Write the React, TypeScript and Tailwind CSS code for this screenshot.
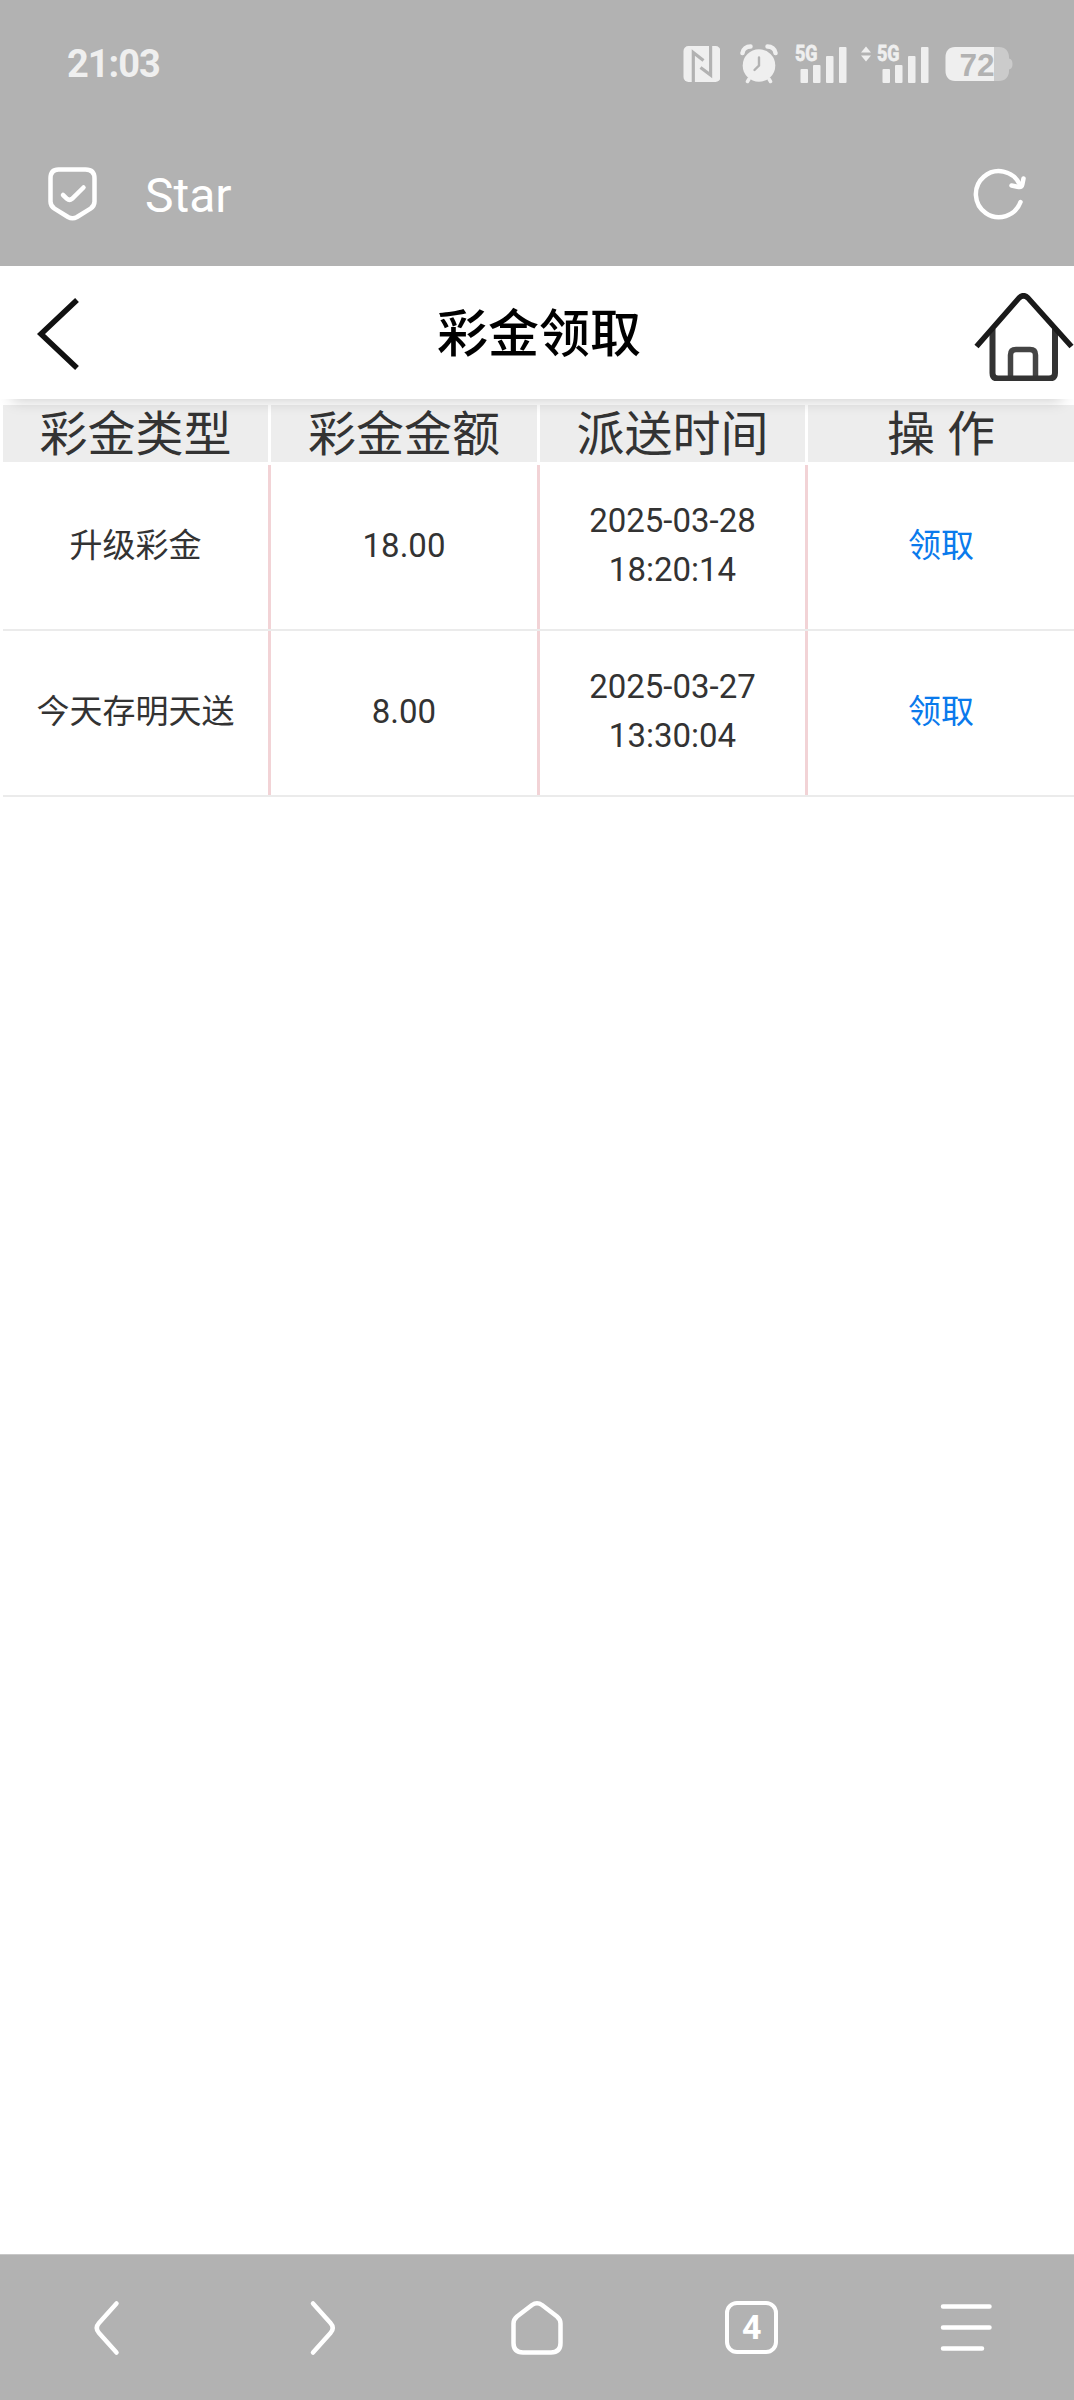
import type { ReactNode } from "react";

const rows = [
  { type: "升级彩金", amount: "18.00", date: "2025-03-28", time: "18:20:14" },
  { type: "今天存明天送", amount: "8.00", date: "2025-03-27", time: "13:30:04" },
];

const headers = ["彩金类型", "彩金金额", "派送时间", "操 作"];

function NfcIcon() {
  return (
    <svg width="38" height="38" viewBox="0 0 38 38" fill="none">
      <rect x="1.500" y="1" width="37" height="36" rx="5" fill="#efefef" />
      <path d="M11.300 37V7.500L21.500 15.500" stroke="#b2b2b2" strokeWidth="3.200" />
      <path d="M28.600 1V30L18.500 22.500" stroke="#b2b2b2" strokeWidth="3.200" />
    </svg>
  );
}

function AlarmIcon() {
  return (
    <svg width="38" height="40" viewBox="0 0 38 40" fill="none">
      <circle cx="19" cy="21.500" r="16.300" fill="#efefef" />
      <path d="M2.500 9C3 5 6.500 2.500 10.500 2.500M35.500 9C35 5 31.500 2.500 27.500 2.500" stroke="#efefef" strokeWidth="4.500" strokeLinecap="round" />
      <path d="M9 35L7.500 37.500M29 35L30.500 37.500" stroke="#efefef" strokeWidth="3.500" strokeLinecap="round" />
      <path d="M19 13.500V21.500L14.500 26" stroke="#b2b2b2" strokeWidth="2.400" strokeLinecap="round" />
    </svg>
  );
}

function SignalIcon({ arrows = false }: { arrows?: boolean }) {
  return (
    <svg width="70" height="50" viewBox="0 -6 70 50" fill="#efefef">
      {arrows && (
        <>
          <path d="M1 7.500L6 1.500L11 7.500Z" />
          <path d="M1 10.500L6 16.500L11 10.500Z" />
        </>
      )}
      <text
        x="17"
        y="16"
        fontSize="21.500"
        fontWeight="700"
        textLength="22.500"
        lengthAdjust="spacingAndGlyphs"
        fontFamily="Roboto, sans-serif"
        stroke="#efefef"
        strokeWidth="0.800"
      >
        5G
      </text>
      <rect x="22.500" y="24" width="7.500" height="14" rx="1" />
      <rect x="35" y="20" width="7.500" height="18" rx="1" />
      <rect x="48" y="11" width="7.500" height="27" rx="1" />
      <rect x="61" y="2" width="7.500" height="36" rx="1" />
    </svg>
  );
}

function BatteryIcon() {
  return (
    <svg width="68" height="36" viewBox="0 0 68 36">
      <path d="M49 1H54C60 1 64 5 64 11V12.500C66 13 67.500 14 67.500 18S66 23 64 23.500V25C64 31 60 35 54 35H49Z" fill="#cbcbcb" />
      <path d="M49 1H10C4 1 0.500 5 0.500 11V25C0.500 31 4 35 10 35H49Z" fill="#efefef" />
      <text x="14.500" y="29.500" fontSize="31.500" fontWeight="700" fill="#b2b2b2" fontFamily="'Liberation Sans', sans-serif">
        72
      </text>
    </svg>
  );
}

function StatusBar() {
  return (
    <div className="flex h-32 items-center pr-[61px] pl-[67px]">
      <span className="text-[38px] leading-none font-bold tracking-[-1px] text-[#efefef]">21:03</span>
      <div className="ml-auto flex items-center">
        <NfcIcon />
        <div className="ml-5">
          <AlarmIcon />
        </div>
        <div>
          <SignalIcon />
        </div>
        <div className="ml-3">
          <SignalIcon arrows />
        </div>
        <div className="ml-[15px]">
          <BatteryIcon />
        </div>
      </div>
    </div>
  );
}

function BrowserBar() {
  return (
    <div className="flex h-[138px] items-center pr-[48px] pb-[7px] pl-[47px]">
      <svg width="51" height="55" viewBox="0 0 51 55" fill="none" stroke="#fff" strokeWidth="4.500" strokeLinecap="round" strokeLinejoin="round">
        <path d="M11.500 3.500H38.500Q47.500 3.500 47.500 12.500V35.500Q47.500 40 43.500 42.700L30 51Q25.500 53.500 21 51L7.500 42.700Q3.500 40 3.500 35.500V12.500Q3.500 3.500 11.500 3.500Z" />
        <path d="M16 29L20 32.800Q22.500 35 25 32.800L36.500 21.500" />
      </svg>
      <span className="mt-1 ml-[47px] text-[48px] leading-none text-white">Star</span>
      <svg className="ml-auto" width="53" height="53" viewBox="0 0 53 53" fill="none" stroke="#fff" strokeWidth="4.500" strokeLinecap="round" strokeLinejoin="round">
        <path d="M47.500 35A23 23 0 1 1 46.500 17" />
        <path d="M50.500 11.500L49.300 17.500Q48.600 20.500 45.500 20L38.500 18.500" />
      </svg>
    </div>
  );
}

function PageHeader() {
  return (
    <div className="relative z-10 flex h-[133px] items-center justify-between bg-white pl-[36px] shadow-[0_13px_14px_-12px_rgba(0,0,0,0.22)]">
      <svg width="46" height="74" viewBox="0 0 46 74" fill="none" stroke="#111" strokeWidth="5.500">
        <path d="M41 4L5 38L41 72" />
      </svg>
      <h1 className="mt-[3px] ml-[22px] text-[51px] leading-none font-medium text-black">彩金领取</h1>
      <svg className="mt-2" width="100" height="88" viewBox="0 0 100 88" fill="none" strokeLinejoin="round">
        <path d="M36.500 86V62Q36.500 56.500 42 56.500H56Q61.500 56.500 61.500 62V86" stroke="#444" strokeWidth="5.500" />
        <path d="M18.500 36V80Q18.500 85.500 24 85.500H75Q81 85.500 81 80V36" stroke="#333" strokeWidth="6" />
        <path d="M2.500 53.500L45 5Q49.500 0.500 54 5L97.500 53.500" stroke="#1a1a1a" strokeWidth="5.500" />
      </svg>
    </div>
  );
}

function Cell({ children }: { children: ReactNode }) {
  return (
    <div className="group flex border-b-2 border-[#ebebeb]">
      <div className="flex flex-1 flex-col items-center justify-center pb-[2px]">{children}</div>
      <div className="w-[3px] bg-[#f2d3d6] group-last:hidden" />
    </div>
  );
}

function BonusTable() {
  return (
    <div className="pt-[6px] pl-[3px] text-[#333]">
      <div className="mb-[3px] grid h-[57px] grid-cols-[268px_269px_268px_1fr]">
        {headers.map((h) => (
          <div
            key={h}
            className="flex items-center justify-center border-r-3 border-white bg-[#ededed] pt-[3px] text-[48px] leading-none last:border-r-0"
          >
            {h}
          </div>
        ))}
      </div>
      {rows.map((row) => (
        <div key={row.date} className="grid h-[166px] grid-cols-[268px_269px_268px_1fr] text-[33px] leading-[48.6px]">
          <Cell>{row.type}</Cell>
          <Cell>{row.amount}</Cell>
          <Cell>
            <span>{row.date}</span>
            <span>{row.time}</span>
          </Cell>
          <Cell>
            <a className="text-[#0a7aec]">领取</a>
          </Cell>
        </div>
      ))}
    </div>
  );
}

function BottomNav() {
  return (
    <div className="grid h-[146px] grid-cols-5 place-items-center border-t border-[#c8c8c8] bg-[#b2b2b2]">
      <svg width="54" height="56" viewBox="0 0 54 56" fill="none" stroke="#fff" strokeWidth="4.500" strokeLinecap="round">
        <path d="M36.500 3.500L19 23Q14.500 28 19 33L36.500 52.500" />
      </svg>
      <svg width="54" height="56" viewBox="0 0 54 56" fill="none" stroke="#fff" strokeWidth="4.500" strokeLinecap="round">
        <path d="M18 3.500L35.500 23Q40 28 35.500 33L18 52.500" />
      </svg>
      <svg width="54" height="56" viewBox="0 0 54 56" fill="none" stroke="#fff" strokeWidth="4.500" strokeLinejoin="round">
        <path d="M22 5Q27 1.500 32 5L47 16.500Q50.500 19.500 50.500 23.500V43Q50.500 52.500 41 52.500H13Q3.500 52.500 3.500 43V23.500Q3.500 19.500 7 16.500Z" />
      </svg>
      <div className="flex h-[53px] w-[53px] items-center justify-center rounded-[12px] border-[4.500px] border-white pb-[2px] text-[34px] leading-none font-bold text-white">
        4
      </div>
      <svg width="54" height="56" viewBox="0 0 54 56" fill="none" stroke="#fff" strokeWidth="4.500" strokeLinecap="round">
        <path d="M3 6.500H49.500M3 27.500H49.500M3 48.500H42" />
      </svg>
    </div>
  );
}

export default function App() {
  return (
    <div className="flex h-[2400px] w-[1074px] flex-col overflow-hidden bg-white font-[Roboto,'Noto_Sans_CJK_SC',sans-serif]">
      <div className="bg-[#b2b2b2]">
        <StatusBar />
        <BrowserBar />
      </div>
      <PageHeader />
      <main className="flex-1">
        <BonusTable />
      </main>
      <BottomNav />
    </div>
  );
}
